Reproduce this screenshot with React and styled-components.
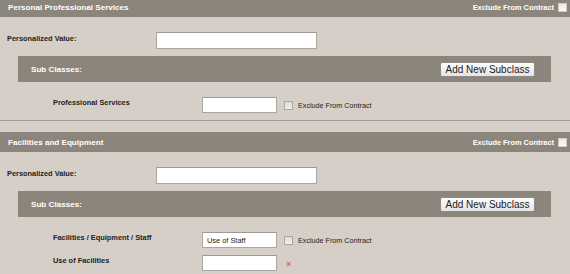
import React from "react";
import styled, { createGlobalStyle } from "styled-components";

const GlobalStyle = createGlobalStyle`
  html, body {
    margin: 0;
    padding: 0;
    background: #d5cfc8;
    font-family: "Liberation Sans", Arial, sans-serif;
    overflow: hidden;
  }
`;

const Page = styled.div`
  width: 570px;
  margin-top: -3px;
`;

const Section = styled.div`
  display: flex;
  flex-direction: column;
`;

const Header = styled.div`
  height: 20px;
  background: #8c857b;
  display: flex;
  align-items: center;
  justify-content: space-between;
  padding: 0 3px 0 8px;
  color: #fff;
  font-weight: bold;
`;

const Title = styled.span`
  font-size: 8.1px;
`;

const HeaderExclude = styled.span`
  display: flex;
  align-items: center;
  gap: 4px;
  font-size: 7.4px;
`;

const Check = styled.span`
  display: inline-block;
  box-sizing: border-box;
  width: 9px;
  height: 9px;
  border: 1px solid ${(p) => (p.light ? "#cfccc7" : "#a9a6a1")};
  background: ${(p) =>
    p.light
      ? "linear-gradient(#ebe9e6, #fafaf9)"
      : "linear-gradient(#dcdad6, #f2f1ef)"};
`;

const Body = styled.div`
  display: flex;
  flex-direction: column;
  padding-top: 15px;
`;

const ValueRow = styled.div`
  display: flex;
  align-items: center;
  height: 17px;
  padding-left: 7px;
`;

const Label = styled.span`
  width: ${(p) => p.width}px;
  margin-bottom: 5px;
  font-size: 7.4px;
  font-weight: bold;
  color: #1e1e1e;
`;

const Input = styled.div`
  box-sizing: border-box;
  width: ${(p) => p.width}px;
  height: ${(p) => p.height}px;
  background: #fff;
  border: 1px solid #aba69f;
  border-top-color: #9e9992;
  font-size: 7.4px;
  color: #222;
  display: flex;
  align-items: center;
  padding-left: 4px;
`;

const SubBar = styled.div`
  margin: 7px 19px 0 18px;
  height: 26px;
  background: #8c857b;
  display: flex;
  align-items: center;
  justify-content: space-between;
  padding: 0 16px 0 13px;
`;

const SubTitle = styled.span`
  color: #fff;
  font-weight: bold;
  font-size: 8.1px;
`;

const AddButton = styled.button`
  box-sizing: border-box;
  width: 95px;
  height: 15px;
  padding: 0;
  margin-top: 1px;
  border: 1px solid #8e8a85;
  border-radius: 2px;
  background: linear-gradient(#fdfdfd, #e4e4e4);
  font-family: "Liberation Sans", Arial, sans-serif;
  font-size: 10px;
  color: #1a1a1a;
  line-height: 13px;
`;

const SubRows = styled.div`
  display: flex;
  flex-direction: column;
  gap: 7px;
  padding: 15px 0 0 53px;
`;

const SubRow = styled.div`
  display: flex;
  align-items: center;
  height: 16px;
`;

const Exclude = styled.span`
  display: flex;
  align-items: center;
  gap: 5px;
  margin-left: 7px;
  font-size: 7.2px;
  color: #222;
`;

const Remove = styled.span`
  margin-left: 9px;
  margin-top: 3px;
  color: #d2403a;
  font-size: 9px;
  line-height: 1;
`;

const Divider = styled.div`
  height: 1px;
  margin: 7px 0 11px;
  background: #a29c95;
`;

function SectionBlock({ title, rows }) {
  return (
    <Section>
      <Header>
        <Title>{title}</Title>
        <HeaderExclude>
          Exclude From Contract <Check light />
        </HeaderExclude>
      </Header>
      <Body>
        <ValueRow>
          <Label width={149}>Personalized Value:</Label>
          <Input width={161} height={17} />
        </ValueRow>
        <SubBar>
          <SubTitle>Sub Classes:</SubTitle>
          <AddButton>Add New Subclass</AddButton>
        </SubBar>
        <SubRows>
          {rows.map((r) => (
            <SubRow key={r.label}>
              <Label width={149}>{r.label}</Label>
              <Input width={75} height={16}>
                {r.value}
              </Input>
              {r.exclude ? (
                <Exclude>
                  <Check /> Exclude From Contract
                </Exclude>
              ) : (
                <Remove>×</Remove>
              )}
            </SubRow>
          ))}
        </SubRows>
      </Body>
    </Section>
  );
}

export default function App() {
  return (
    <Page>
      <GlobalStyle />
      <SectionBlock
        title="Personal Professional Services"
        rows={[{ label: "Professional Services", value: "", exclude: true }]}
      />
      <Divider />
      <SectionBlock
        title="Facilities and Equipment"
        rows={[
          { label: "Facilities / Equipment / Staff", value: "Use of Staff", exclude: true },
          { label: "Use of Facilities", value: "", exclude: false },
        ]}
      />
    </Page>
  );
}
